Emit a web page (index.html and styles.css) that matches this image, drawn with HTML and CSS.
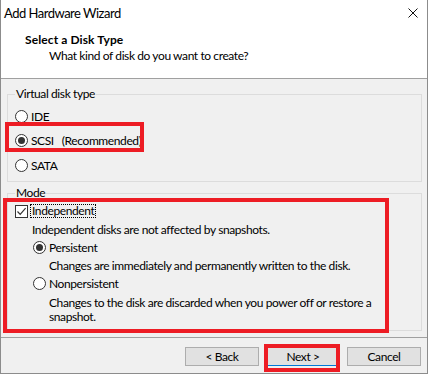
FILE: index.html
```html
<!DOCTYPE html>
<html lang="en">
<head>
  <meta charset="UTF-8" />
  <title>Add Hardware Wizard</title>
  <link rel="stylesheet" href="styles.css">
</head>
<body>
  <div class="window">
    <div class="header">
      <div class="titlebar">
        <span class="title">Add Hardware Wizard</span>
        <svg class="close" width="10" height="10" viewBox="0 0 10 10">
          <path d="M0.5 0.5 L9.5 9.5 M9.5 0.5 L0.5 9.5" stroke="#111" stroke-width="1" fill="none"/>
        </svg>
      </div>
      <div class="heading">Select a Disk Type</div>
      <div class="subheading">What kind of disk do you want to create?</div>
    </div>

    <fieldset class="group group-type">
      <legend>Virtual disk type</legend>
      <div class="row"><span class="radio"></span>IDE</div>
      <div class="row"><span class="radio checked"></span>SCSI<span class="hint">(Recommended)</span></div>
      <div class="row"><span class="radio"></span>SATA</div>
    </fieldset>

    <fieldset class="group group-mode">
      <legend>Mode</legend>
      <div class="row">
        <span class="checkbox">
          <svg width="11" height="11" viewBox="0 0 11 11">
            <path d="M1.5 5.5 L4.2 8.3 L9.6 2.2" stroke="#333" stroke-width="1.2" fill="none"/>
          </svg>
        </span>
        <span class="focus">Independent</span>
      </div>
      <div class="row note">Independent disks are not affected by snapshots.</div>
      <div class="row sub"><span class="radio checked"></span>Persistent</div>
      <div class="row sub-note">Changes are immediately and permanently written to the disk.</div>
      <div class="row sub"><span class="radio"></span>Nonpersistent</div>
      <p class="sub-note wrap">Changes to the disk are discarded when you power off or restore a<br>snapshot.</p>
    </fieldset>

    <div class="footer">
      <button class="btn">&lt; Back</button>
      <button class="btn default">Next &gt;</button>
      <button class="btn">Cancel</button>
    </div>

    <!-- annotation boxes -->
    <div class="mark mark-scsi"></div>
    <div class="mark mark-mode"></div>
    <div class="mark mark-next"></div>
  </div>
</body>
</html>
```

FILE: styles.css
```css
body {
  margin: 0;
  background: #2b2b2b;
  font-family: "Segoe UI", Lato, sans-serif;
  font-size: 12px;
  letter-spacing: -0.4px;
  color: #000;
}

.window {
  position: relative;
  width: 428px;
  height: 374px;
  box-sizing: border-box;
  border: 1px solid #8c8c8c;
  border-top: none;
  background: #f0f0f0;
  overflow: hidden;
}

.header {
  height: 78px;
  background: #fff;
  border-bottom: 1px solid #a0a0a0;
}

.titlebar {
  height: 26px;
  display: flex;
  align-items: center;
  justify-content: space-between;
  padding: 0 9px 0 3px;
}

.title {
  font-size: 13px;
  letter-spacing: -0.5px;
}

.close {
  display: block;
}

.heading {
  padding-left: 24px;
  margin-top: 6px;
  font-weight: bold;
  letter-spacing: 0.1px;
  line-height: 16px;
}

.subheading {
  padding-left: 48px;
  line-height: 16px;
}

/* Group boxes */
.group {
  margin: 0 5px 0 6px;
  padding: 0 0 0 7px;
  border: 1px solid #dcdcdc;
  min-width: 0;
  box-sizing: border-box;
}

.group legend {
  padding: 0 1px;
  line-height: 16px;
}

.group-type {
  margin-top: 7px;
  height: 96px;
}

.group-mode {
  margin-top: 3px;
  height: 146px;
}

.row {
  display: flex;
  align-items: center;
  white-space: nowrap;
}

.group-type .row {
  height: 24.5px;
}

.group-type .row:first-of-type {
  margin-top: 2px;
}

.group-mode .row {
  height: 18px;
}

.group-mode .row:first-of-type {
  margin-top: 1px;
}

.hint {
  margin-left: 8px;
}

.radio {
  width: 13px;
  height: 13px;
  box-sizing: border-box;
  border: 1px solid #333;
  border-radius: 50%;
  background: #fff;
  margin-right: 3px;
  display: flex;
  align-items: center;
  justify-content: center;
}

.radio.checked::after {
  content: "";
  width: 7px;
  height: 7px;
  border-radius: 50%;
  background: #333;
}

.checkbox {
  width: 13px;
  height: 13px;
  box-sizing: border-box;
  border: 1px solid #333;
  background: #fff;
  margin-right: 2px;
  display: flex;
  align-items: center;
  justify-content: center;
}

.checkbox svg {
  display: block;
}

.focus {
  border: 1px dotted #000;
  padding: 0 1px;
  line-height: 12px;
}

.note {
  padding-left: 17px;
}

.sub {
  padding-left: 18px;
}

.sub-note {
  padding-left: 34px;
}

.wrap {
  margin: 4px 0 0;
  line-height: 14px;
  white-space: nowrap;
}

/* Buttons */
.footer {
  margin-top: 6px;
  border-top: 1px solid #a0a0a0;
  display: flex;
  justify-content: flex-end;
  gap: 7px;
  padding: 9px 6px 0 0;
}

.btn {
  width: 74px;
  height: 19px;
  padding: 0;
  font: inherit;
  letter-spacing: inherit;
  line-height: 17px;
  background: #e1e1e1;
  border: 1px solid #adadad;
  color: #000;
}

.btn.default {
  border-color: #0078d7;
}

/* Red annotation boxes drawn over the dialog */
.mark {
  position: absolute;
  box-sizing: border-box;
  border: 4px solid #ed1c24;
}

.mark-scsi {
  left: 4px;
  top: 122px;
  width: 139px;
  height: 30px;
}

.mark-mode {
  left: 2px;
  top: 198px;
  width: 386px;
  height: 135px;
}

.mark-next {
  left: 263px;
  top: 344px;
  width: 76px;
  height: 28px;
}
```
